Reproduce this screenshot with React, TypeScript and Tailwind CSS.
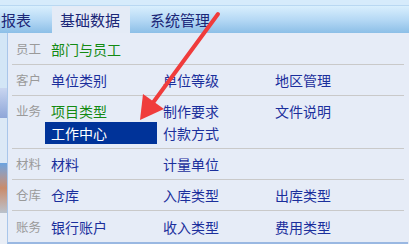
import React from 'react';

type Item = { text: string; green?: boolean; active?: boolean };
type Row = { label: string; lines: (Item | null)[][]; h: string };

const rows: Row[] = [
  { label: '员工', h: 'h-[32px]', lines: [[{ text: '部门与员工', green: true }]] },
  { label: '客户', h: 'h-[31px]', lines: [[{ text: '单位类别' }, { text: '单位等级' }, { text: '地区管理' }]] },
  {
    label: '业务',
    h: 'h-[53px]',
    lines: [
      [{ text: '项目类型', green: true }, { text: '制作要求' }, { text: '文件说明' }],
      [{ text: '工作中心', active: true }, { text: '付款方式' }],
    ],
  },
  { label: '材料', h: 'h-[31px]', lines: [[{ text: '材料' }, { text: '计量单位' }]] },
  { label: '仓库', h: 'h-[31px]', lines: [[{ text: '仓库' }, { text: '入库类型' }, { text: '出库类型' }]] },
  { label: '账务', h: 'h-[31px]', lines: [[{ text: '银行账户' }, { text: '收入类型' }, { text: '费用类型' }]] },
];

function Cell({ item }: { item: Item | null }) {
  if (!item) return <div className="w-[112px]" />;
  const color = item.active
    ? 'bg-[#003399] text-white'
    : item.green
    ? 'text-[#138a13]'
    : 'text-[#1b2f9c]';
  return (
    <div className={`w-[112px] h-[22px] leading-[22px] pl-[6px] text-[14px] ${color}`}>
      {item.text}
    </div>
  );
}

export default function App() {
  return (
    <div
      className="relative w-[409px] h-[244px] overflow-hidden bg-[#e6ecf7]"
      style={{ fontFamily: '"Noto Sans CJK SC", "Noto Sans", sans-serif' }}
    >
      {/* top strip */}
      <div className="h-[6px] bg-[#d6ebfb] border-b border-[#b9d8f2]" />
      {/* nav bar */}
      <div className="flex h-[27px] bg-gradient-to-b from-[#d9effd] via-[#b6d9f5] to-[#8cbfe7] text-[15px] text-[#1a2677]">
        <div className="w-[52px] pl-[1px] leading-[27px]">报表</div>
        <div className="w-[78px] bg-[#e4ebf6] leading-[27px] pl-[8px]">基础数据</div>
        <div className="pl-[20px] leading-[27px]">系统管理</div>
      </div>

      <div className="flex h-[211px]">
        {/* left background strip */}
        <div className="w-[7px] flex flex-col">
          <div className="h-[55px] bg-[#d3e6f6]" />
          <div className="h-[30px] bg-gradient-to-b from-[#c9d6f0] to-[#8fa6d8]" />
          <div className="h-[45px] bg-[#dce9f6]" />
          <div className="h-[50px] bg-gradient-to-b from-[#6aa3e0] via-[#c98b6a] to-[#b9c2cc]" />
          <div className="flex-1 bg-[#e9eef6]" />
        </div>
        {/* dropdown panel */}
        <div className="flex-1 border-l border-[#a9c6ea] border-b-2 border-b-[#9ab8e2] mr-[1px] px-[4px]">
          {rows.map((row, i) => (
            <div
              key={row.label}
              className={`flex ${row.h} ${i < rows.length - 1 ? 'border-b border-[#c9c9c9]' : ''} ${
                row.lines.length > 1 ? 'items-start pt-[4px]' : 'items-center'
              }`}
            >
              <div className="w-[33px] pl-[4px] text-[12.5px] text-[#9a9a9a] leading-[22px]">
                {row.label}
              </div>
              <div className="flex flex-col">
                {row.lines.map((line, j) => (
                  <div key={j} className="flex">
                    {line.map((it, k) => (
                      <Cell key={k} item={it} />
                    ))}
                  </div>
                ))}
              </div>
            </div>
          ))}
        </div>
      </div>

      {/* red annotation arrow */}
      <svg className="absolute left-0 top-0 pointer-events-none" width="409" height="244">
        <line x1="218" y1="14" x2="152" y2="104" stroke="#f03c3c" strokeWidth="4" strokeLinecap="round" />
        <polygon points="140,120 143,94 164,109" fill="#f03c3c" />
      </svg>
    </div>
  );
}
